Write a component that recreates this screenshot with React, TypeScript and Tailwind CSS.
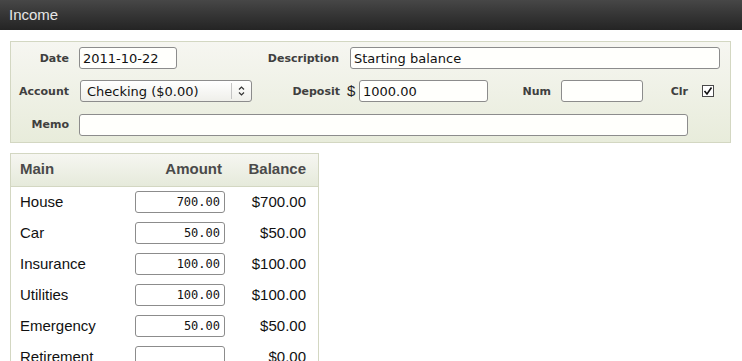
import React from "react";

const rows = [
  { name: "House", amount: "700.00", balance: "$700.00" },
  { name: "Car", amount: "50.00", balance: "$50.00" },
  { name: "Insurance", amount: "100.00", balance: "$100.00" },
  { name: "Utilities", amount: "100.00", balance: "$100.00" },
  { name: "Emergency", amount: "50.00", balance: "$50.00" },
  { name: "Retirement", amount: "", balance: "$0.00" },
];

const label =
  "text-right text-[11px] font-bold text-[#3f3f3f] [font-family:'DejaVu_Sans',sans-serif] leading-none";
const field =
  "h-[22px] rounded-[3px] border border-[#8c8c8c] bg-[#fffffc] px-[3px] text-[13px] text-[#111] [font-family:'DejaVu_Sans',sans-serif] outline-none";

function Label({ text, w }: { text: string; w: string }) {
  return <div className={`${label} ${w} shrink-0`}>{text}</div>;
}

export default function App() {
  return (
    <div className="w-[742px] h-[361px] overflow-hidden bg-white [font-family:'Liberation_Sans',Arial,sans-serif]">
      <div className="h-[30px] flex items-center px-[9px] bg-gradient-to-b from-[#474747] to-[#242424]">
        <span className="text-[15px] text-[#e6e6e6]">Income</span>
      </div>

      <div className="mt-[11px] mx-[10px] w-[721px] border border-[#d3d7c2] bg-gradient-to-b from-[#f6f6f1] to-[#e8ecdb] pt-[5px] pb-[6px] flex flex-col gap-[11px]">
        <div className="flex items-center">
          <Label text="Date" w="w-[58px]" />
          <input className={`${field} ml-[10px] w-[98px]`} defaultValue="2011-10-22" />
          <Label text="Description" w="w-[162px]" />
          <input className={`${field} ml-[11px] w-[370px]`} defaultValue="Starting balance" />
        </div>
        <div className="flex items-center">
          <Label text="Account" w="w-[58px]" />
          <div className="ml-[11px] w-[172px] h-[22px] rounded-[3px] border border-[#8c8c8c] bg-gradient-to-b from-white to-[#efefea] flex items-center">
            <span className="flex-1 pl-[6px] text-[13px] text-[#111] [font-family:'DejaVu_Sans',sans-serif]">
              Checking ($0.00)
            </span>
            <div className="w-px h-[16px] bg-[#c4c4c4]" />
            <svg width="19" height="20" viewBox="0 0 19 20" className="shrink-0">
              <path d="M7 8.5 L9.5 6 L12 8.5 M7 11.5 L9.5 14 L12 11.5" fill="none" stroke="#333" strokeWidth="1.2" />
            </svg>
          </div>
          <Label text="Deposit" w="w-[88px]" />
          <span className="ml-[7px] w-[12px] text-[15px] text-[#222]">$</span>
          <input className={`${field} w-[129px]`} defaultValue="1000.00" />
          <Label text="Num" w="w-[63px]" />
          <input className={`${field} ml-[10px] w-[82px]`} defaultValue="" />
          <Label text="Clr" w="w-[45px]" />
          <div className="ml-[14px] w-[12px] h-[12px] border border-[#4a4a4a] bg-white flex items-center justify-center">
            <svg width="10" height="10" viewBox="0 0 10 10">
              <path d="M1.5 5 L4 8 L8.5 1.5" fill="none" stroke="#111" strokeWidth="1.6" />
            </svg>
          </div>
        </div>
        <div className="flex items-center">
          <Label text="Memo" w="w-[58px]" />
          <input className={`${field} ml-[10px] w-[609px]`} defaultValue="" />
        </div>
      </div>

      <div className="mt-[10px] mx-[10px] w-[309px] border border-[#d3d7c2]">
        <div className="h-[33px] grid grid-cols-[115px_90px_81px] items-center pl-[9px] pr-[13px] border-b border-[#d3d7c2] bg-gradient-to-b from-[#f6f6f1] to-[#e6eadb] text-[15px] font-bold text-[#4a4a4a]">
          <span>Main</span>
          <span className="text-right pr-[3px]">Amount</span>
          <span className="text-right">Balance</span>
        </div>
        {rows.map((r) => (
          <div
            key={r.name}
            className="h-[31px] grid grid-cols-[115px_90px_81px] items-center pl-[9px] pr-[13px] text-[15px] text-[#111]"
          >
            <span>{r.name}</span>
            <input
              className="h-[22px] w-[90px] rounded-[3px] border border-[#8c8c8c] bg-white pr-[4px] text-right text-[12px] text-[#111] [font-family:'DejaVu_Sans_Mono',monospace] outline-none"
              defaultValue={r.amount}
            />
            <span className="text-right">{r.balance}</span>
          </div>
        ))}
      </div>
    </div>
  );
}
